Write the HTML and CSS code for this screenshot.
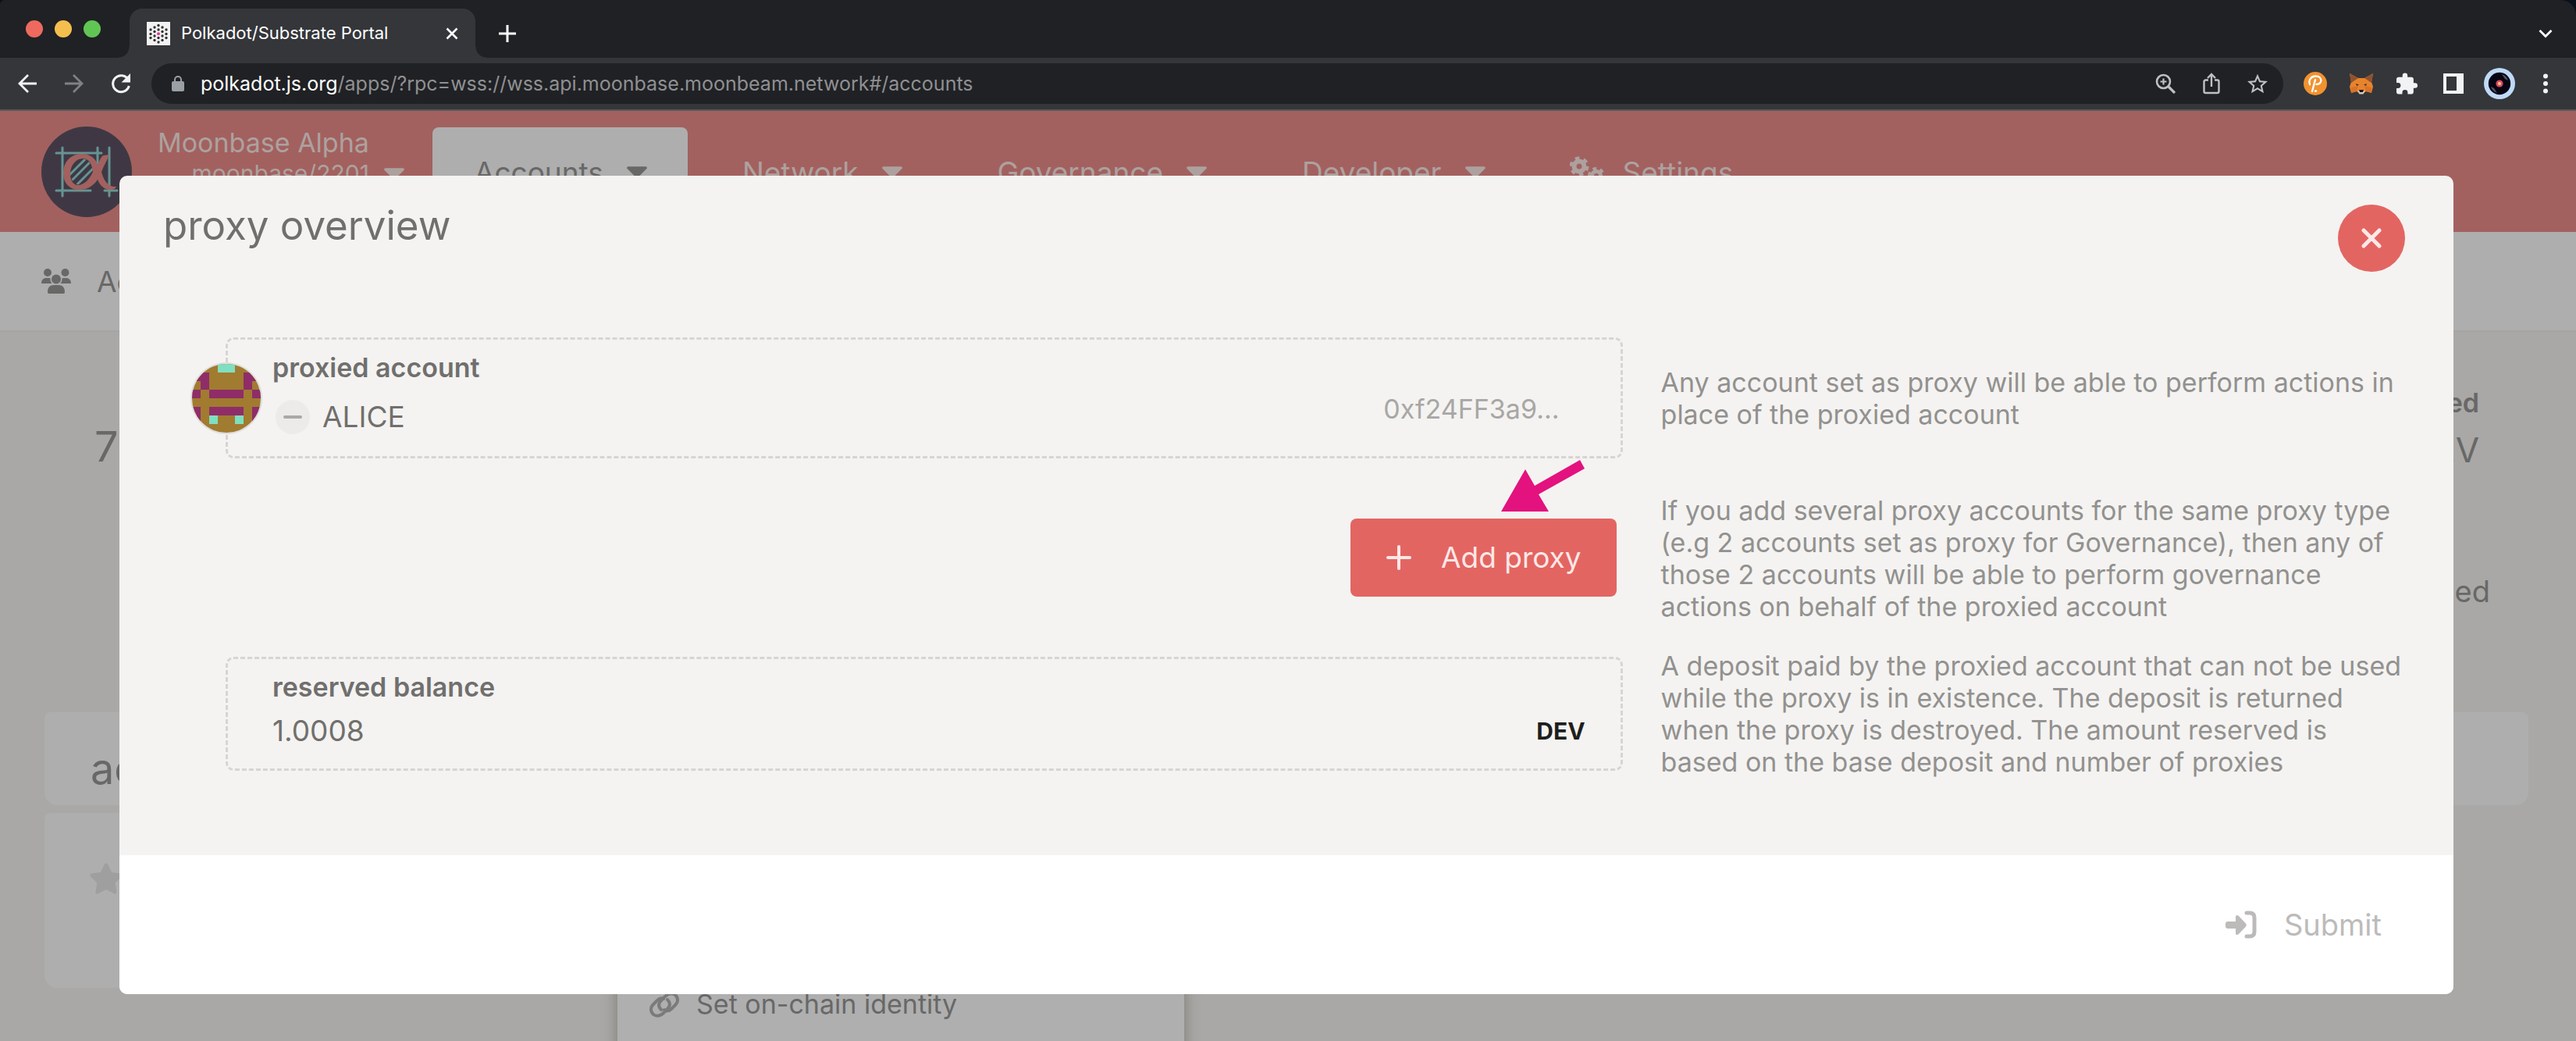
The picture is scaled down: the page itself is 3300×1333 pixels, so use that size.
FILE: index.html
```html
<!DOCTYPE html>
<html lang="en">
<head>
<meta charset="utf-8">
<title>Polkadot/Substrate Portal</title>
<link rel="stylesheet" href="styles.css">
</head>
<body>
<svg class="sprite" aria-hidden="true">
  <symbol id="caret" viewBox="10 192 300 170"><path d="M31.3 192h257.3c17.8 0 26.7 21.5 14.1 34.1L174.1 354.8c-7.8 7.8-20.5 7.8-28.3 0L17.2 226.1C4.6 213.5 13.5 192 31.3 192z"/></symbol>
</svg>
<div class="window">
  <header class="browser">
    <div class="tabstrip">
      <div class="lights"><span class="light red"></span><span class="light yellow"></span><span class="light green"></span></div>
      <div class="tab">
        <svg class="favicon" viewBox="0 0 30 30"><rect width="30" height="30" fill="#f2f2f2"/>
          <g fill="#333"><circle cx="15" cy="4.500" r="1.700"/><circle cx="10" cy="7" r="1.700"/><circle cx="20" cy="7" r="1.700"/><circle cx="5" cy="10" r="1.700"/><circle cx="15" cy="10" r="1.700"/><circle cx="25" cy="10" r="1.700"/><circle cx="10" cy="12.500" r="1.700"/><circle cx="20" cy="12.500" r="1.700"/><circle cx="5" cy="15.500" r="1.700"/><circle cx="25" cy="15.500" r="1.700"/><circle cx="10" cy="18" r="1.700"/><circle cx="20" cy="18" r="1.700"/><circle cx="5" cy="20.500" r="1.700"/><circle cx="15" cy="20.500" r="1.700"/><circle cx="25" cy="20.500" r="1.700"/><circle cx="10" cy="23.500" r="1.700"/><circle cx="20" cy="23.500" r="1.700"/><circle cx="15" cy="26" r="1.700"/></g><circle cx="15" cy="15.300" r="2" fill="#d6409a"/></svg>
        <span class="tab-title">Polkadot/Substrate Portal</span>
        <button class="icon-btn tab-close" aria-label="Close tab"><svg width="16" height="16" viewBox="0 0 16 16"><path d="M1.500 1.500l13 13M14.500 1.500l-13 13" stroke="#fff" stroke-width="2.600"/></svg></button>
      </div>
      <button class="icon-btn new-tab" aria-label="New tab"><svg width="22" height="22" viewBox="0 0 22 22"><path d="M11 0v22M0 11h22" stroke="#fff" stroke-width="3"/></svg></button>
      <button class="icon-btn tab-search" aria-label="Search tabs"><svg width="18" height="12" viewBox="0 0 18 12"><path d="M1.500 2L9 9.500 16.500 2" fill="none" stroke="#fff" stroke-width="2.800"/></svg></button>
    </div>
    <div class="toolbar">
      <button class="icon-btn nav-btn" aria-label="Back"><svg width="24" height="24" viewBox="0 0 24 24"><path d="M24 12H2M13 1L2 12l11 11" fill="none" stroke="#f1f3f4" stroke-width="2.800"/></svg></button>
      <button class="icon-btn nav-btn" aria-label="Forward"><svg width="24" height="24" viewBox="0 0 24 24"><path d="M0 12h22M11 1l11 11-11 11" fill="none" stroke="#808184" stroke-width="2.800"/></svg></button>
      <button class="icon-btn nav-btn" aria-label="Reload"><svg width="26" height="26" viewBox="0 0 26 26"><path d="M22 7.500A10.500 10.500 0 1 0 23.300 16" fill="none" stroke="#f1f3f4" stroke-width="3"/><path d="M25 0v11.500H13.500z" fill="#f1f3f4"/></svg></button>
      <div class="omnibox">
        <svg width="16" height="20" viewBox="0 0 16 20"><rect y="7" width="16" height="13" rx="2" fill="#9aa0a6"/><path d="M4 8V5a4 4 0 0 1 8 0v3" fill="none" stroke="#9aa0a6" stroke-width="2"/></svg>
        <span class="url"><span class="host">polkadot.js.org</span>/apps/?rpc=wss://wss.api.moonbase.moonbeam.network#/accounts</span>
        <button class="icon-btn ext" aria-label="Zoom"><svg width="26" height="26" viewBox="0 0 26 26" fill="none" stroke="#bdc1c6" stroke-width="2.600"><circle cx="10.500" cy="10.500" r="8.500"/><path d="M10.500 6.500v8M6.500 10.500h8" stroke-width="2.200"/><path d="M17 17l8 8" stroke-width="3.200"/></svg></button>
        <button class="icon-btn ext" aria-label="Share"><svg width="22" height="28" viewBox="0 0 22 28" fill="none" stroke="#bdc1c6" stroke-width="2.400"><path d="M7 9.500H3.500a2 2 0 0 0-2 2v12.500a2 2 0 0 0 2 2h15a2 2 0 0 0 2-2V11.500a2 2 0 0 0-2-2H15M11 18V2.500M6 7l5-5 5 5"/></svg></button>
        <button class="icon-btn ext" aria-label="Bookmark"><svg width="26" height="28" viewBox="2 1 20 21" fill="#bdc1c6"><path d="M22 9.240l-7.190-.620L12 2 9.190 8.630 2 9.240l5.460 4.730L5.820 21 12 17.270 18.180 21l-1.630-7.030L22 9.240zM12 15.400l-3.760 2.270 1-4.280-3.320-2.880 4.380-.380L12 6.100l1.710 4.040 4.380.380-3.320 2.880 1 4.280L12 15.400z"/></svg></button>
      </div>
      <button class="icon-btn ext" aria-label="Polkadot extension"><svg width="30" height="30" viewBox="0 0 30 30"><circle cx="15" cy="15" r="15" fill="#f2922f"/><path d="M8 16c-2-6 2-10.500 7.500-10.500 9 0 9 10.500 1 10.500M15 10l-4 15" fill="none" stroke="#fff" stroke-width="2.400" stroke-linecap="round"/><circle cx="15.500" cy="24.500" r="1.600" fill="#fff"/></svg></button>
      <button class="icon-btn ext" aria-label="MetaMask"><svg width="30" height="28" viewBox="0 0 30 28"><path d="M0 1l11 6h8l11-6-2 11 2 6-2 8-7-2-4 3h-4l-4-3-7 2-2-8 2-6z" fill="#e8832b"/><path d="M0 1l11 6-9 6zM30 1L19 7l9 6z" fill="#8f5330"/><path d="M2 26l7-2 2-7-9 2zM28 26l-7-2-2-7 9 2z" fill="#d97328"/><path d="M8 14l4 1.500-3 1.500zM22 14l-4 1.500 3 1.500z" fill="#3b3440"/><path d="M10 23h10l-2.500 4.500h-5z" fill="#d8c9bd"/><path d="M12 22h6l-1 3h-4z" fill="#161616"/></svg></button>
      <button class="icon-btn ext" aria-label="Extensions"><svg width="27" height="28" viewBox="2 1 21 21"><path fill="#f1f3f4" d="M20.500 11H19V7c0-1.100-.900-2-2-2h-4V3.500a2.500 2.500 0 0 0-5 0V5H4c-1.100 0-2 .900-2 2v3.800h1.500a2.700 2.700 0 0 1 0 5.400H2V20c0 1.100.900 2 2 2h3.800v-1.500a2.700 2.700 0 0 1 5.400 0V22H17c1.100 0 2-.900 2-2v-4h1.500a2.500 2.500 0 0 0 0-5z"/></svg></button>
      <button class="icon-btn ext" aria-label="Side panel"><svg width="26" height="26" viewBox="0 0 26 26"><path fill="#f1f3f4" fill-rule="evenodd" d="M0 0h26v26H0zM4 4v18h13V4z"/></svg></button>
      <button class="icon-btn ext" aria-label="Profile"><svg width="40" height="40" viewBox="0 0 40 40"><circle cx="20" cy="20" r="20" fill="#bedaf7"/><circle cx="20" cy="20" r="14.200" fill="#070414"/><path d="M23 8a12 12 0 0 1 8 8l-4-2zM17 32a12 12 0 0 1-8-8l4 2z" fill="#55555d"/><circle cx="20" cy="20" r="4.600" fill="#d8476b"/><circle cx="20" cy="20" r="2" fill="#ffd257"/></svg></button>
      <button class="icon-btn ext" aria-label="Menu"><svg width="6" height="26" viewBox="0 0 6 26" fill="#f1f3f4"><circle cx="3" cy="3.500" r="3"/><circle cx="3" cy="13" r="3"/><circle cx="3" cy="22.500" r="3"/></svg></button>
    </div>
  </header>

  <div class="viewport">
    <div class="app">
      <nav class="menubar">
        <svg class="logo" viewBox="0 0 116 116">
          <defs><clipPath id="bowl"><ellipse cx="51" cy="58" rx="15" ry="17"/></clipPath></defs>
          <circle cx="58" cy="58" r="58" fill="#3f3844"/>
          <g stroke="#659492" stroke-width="3" stroke-linecap="round" fill="none">
            <path d="M19 34h58M27 27v62M72 27v20M87 27v62M19 82h44M81 82h16"/>
            <path clip-path="url(#bowl)" d="M32 66l30-30M34 74l36-36M42 78l36-36"/>
          </g>
          <path fill="#a2615f" fill-rule="evenodd" d="M52 35C62 35 70 41 72 49C75 43 77 37 80 37L87 36C84 44 80 50 77 58C79 66 84 78 96 77C94 83 78 84 72 68C66 77 58 81 48 81C36 81 28 72 28 60C28 45 38 35 52 35ZM53 41C44 41 37 50 37 61C37 69 41 75 47 75C55 75 62 67 66 58C65 48 61 41 53 41Z"/>
        </svg>
        <button class="chain"><span class="chain-name">Moonbase Alpha</span><span class="chain-spec">moonbase/2201</span><svg class="caret"><use href="#caret"/></svg></button>
        <button class="menu active">Accounts<svg class="caret"><use href="#caret"/></svg></button>
        <button class="menu">Network<svg class="caret"><use href="#caret"/></svg></button>
        <button class="menu">Governance<svg class="caret"><use href="#caret"/></svg></button>
        <button class="menu">Developer<svg class="caret"><use href="#caret"/></svg></button>
        <a class="menu settings" href="#settings"><svg width="48" height="40" viewBox="0 0 48 40" fill="none" stroke="#ada19f"><circle cx="12" cy="13" r="6.500" stroke-width="6"/><circle cx="12" cy="13" r="10.500" stroke-width="4" stroke-dasharray="5.500 5.500"/><circle cx="34" cy="25" r="5.500" stroke-width="5"/><circle cx="34" cy="25" r="9" stroke-width="4" stroke-dasharray="4.700 4.700"/></svg>Settings</a>
      </nav>
      <div class="subnav">
        <svg width="38" height="32" viewBox="0 0 38 32" fill="#686867"><circle cx="8" cy="5" r="5"/><circle cx="30.500" cy="5" r="5"/><circle cx="19" cy="13.500" r="6"/><path d="M0 19c0-5 3-7 6-7h4c1 0 1.500.300 1.500.300-.300 3 .500 5 2 6.700zM38 19c0-5-3-7-6-7h-4c-1 0-1.500.300-1.500.300.300 3-.500 5-2 6.700zM8 30c0-6 3-9 8-9h6c5 0 8 3 8 9 0 1-.500 2-2 2H10c-1.500 0-2-1-2-2z"/></svg>
        <a href="#accounts">Accounts</a>
      </div>
      <main class="content">
        <section class="summary">
          <div class="count">7</div>
          <div class="totals">
            <div class="total"><div class="total-label">reserved</div><div class="total-value">DEV</div></div>
            <div class="filter">proxied</div>
          </div>
        </section>
        <section class="card heading-card"><h2>accounts</h2></section>
        <section class="card account-card">
          <svg width="44" height="40" viewBox="0 0 576 512" fill="#a09f9f"><path d="M259.300 17.800L194 150.200 47.900 171.500c-26.200 3.800-36.700 36.100-17.700 54.600l105.700 103-25 145.500c-4.500 26.300 23.200 46 46.400 33.700L288 439.600l130.700 68.700c23.200 12.200 50.900-7.400 46.400-33.700l-25-145.500 105.700-103c19-18.500 8.500-50.800-17.700-54.600L382 150.200 316.700 17.800c-11.700-23.600-45.600-23.900-57.400 0z"/></svg>
          <div class="popup">
            <button class="popup-item"><svg width="42" height="34" viewBox="0 0 42 34" fill="none" stroke="#7c7b7b" stroke-width="4" stroke-linecap="round"><path d="M17 24c-4-4-4-8 0-12l5-5c4-4 9-5 13-2 4 4 4 9 0 13l-5 5c-3 3-7 3-9 1"/><path d="M25 11c4 4 4 8 0 12l-4 4c-4 5-10 6-14 3-4-4-4-9 0-13l5-5c3-3 6-3 8-2"/></svg>Set on-chain identity</button>
          </div>
        </section>
      </main>
    </div>

    <div class="overlay">
      <div class="modal" role="dialog" aria-labelledby="modal-title">
        <header class="modal-head">
          <h1 id="modal-title">proxy overview</h1>
          <button class="close" aria-label="Close"><svg width="26" height="26" viewBox="0 0 26 26"><path d="M3 3l20 20M23 3L3 23" stroke="#fde8e6" stroke-width="5" stroke-linecap="round"/></svg></button>
        </header>
        <div class="rows">
          <div class="field account">
            <svg class="identicon" viewBox="0 0 92 92">
              <defs><clipPath id="disc"><circle cx="46" cy="46" r="44"/></clipPath></defs>
              <circle cx="46" cy="46" r="46" fill="#dfdedd"/>
              <g clip-path="url(#disc)"><g transform="translate(2 2) scale(11)" shape-rendering="crispEdges"><rect width="8" height="8" fill="#a17b30"/><path fill="#8f2d68" d="M0 1h2v2h-1v-1h-1zM6 1h2v1h-1v1h-1zM0 3h1v1h-1zM2 3h4v1h-4zM7 3h1v1h-1zM0 5h1v2h-1zM2 5h4v1h-4zM7 5h1v2h-1z"/><path fill="#7fdfc0" d="M3 0h2v1h-2zM2 6h1v1h-1zM5 6h1v1h-1z"/></g></g>
            </svg>
            <label for="proxied">proxied account</label>
            <div class="account-line">
              <span class="badge"><svg width="24" height="4" viewBox="0 0 24 4"><path d="M2 2h20" stroke="#aaa9a8" stroke-width="4" stroke-linecap="round"/></svg></span>
              <output id="proxied" class="value">ALICE</output>
              <span class="address">0xf24FF3a9...</span>
            </div>
          </div>
          <p class="help tall">Any account set as proxy will be able to perform actions in place of the proxied account</p>

          <div class="actions">
            <button class="add"><svg width="32" height="32" viewBox="0 0 32 32"><path d="M16 2v28M2 16h28" stroke="#fde8e6" stroke-width="4" stroke-linecap="round"/></svg>Add proxy
              <svg class="pointer" viewBox="0 0 107 66"><path fill="#e3127e" d="M0 66L31 12l12 21L101 0l6 11-59 33 13 22z"/></svg>
            </button>
          </div>
          <p class="help">If you add several proxy accounts for the same proxy type (e.g 2 accounts set as proxy for Governance), then any of those 2 accounts will be able to perform governance actions on behalf of the proxied account</p>

          <div class="field balance">
            <label for="reserved">reserved balance</label>
            <div class="balance-line"><output id="reserved" class="value">1.0008</output><span class="unit">DEV</span></div>
          </div>
          <p class="help">A deposit paid by the proxied account that can not be used while the proxy is in existence. The deposit is returned when the proxy is destroyed. The amount reserved is based on the base deposit and number of proxies</p>
        </div>
        <footer class="modal-foot">
          <button class="submit" disabled><svg width="40" height="36" viewBox="0 0 40 36"><path d="M3 14h10V8c0-2 2-3 4-1l9 9.500c1 1.200 1 2.800 0 4L17 30c-2 2-4 1-4-1v-6H3c-2 0-3-1-3-3v-3c0-2 1-3 3-3z" fill="#bcbbba"/><path d="M27 3h4c4 0 6 2 6 6v18c0 4-2 6-6 6h-4" fill="none" stroke="#bcbbba" stroke-width="5" stroke-linecap="round"/></svg>Submit</button>
        </footer>
      </div>
    </div>
  </div>
</div>
</body>
</html>
```
FILE: styles.css
```css
* { box-sizing: border-box; }
body { margin: 0; background: #0c101b; font-family: Inter, "Liberation Sans", sans-serif; font-size: 34px; line-height: 41px; }
button { border: 0; background: none; padding: 0; margin: 0; font: inherit; color: inherit; text-align: left; }
a { color: inherit; text-decoration: none; }
h1, h2, p { margin: 0; font-weight: 400; }
svg { display: block; flex: none; }
.sprite { position: absolute; width: 0; height: 0; }

.window { display: flex; flex-direction: column; height: 100vh; overflow: hidden; border-radius: 6px 20px 0 0; }

/* Browser chrome */
.browser { background: #202124; }
.tabstrip { display: flex; align-items: center; height: 74px; padding: 0 30px 0 33px; }
.lights { display: flex; gap: 15px; }
.light { width: 22px; height: 22px; border-radius: 50%; }
.red { background: #ee6a5f; }
.yellow { background: #f5bf4f; }
.green { background: #61c554; }
.tab { position: relative; align-self: flex-end; display: flex; align-items: center; width: 443px; height: 63px; margin-left: 37px; padding: 0 22px; border-radius: 16px 16px 0 0; background: #35363a; }
.tab::before, .tab::after { content: ""; position: absolute; bottom: 0; width: 14px; height: 14px; }
.tab::before { right: 100%; background: radial-gradient(circle at 0 0, #202124 13px, #35363a 14px); }
.tab::after { left: 100%; background: radial-gradient(circle at 100% 0, #202124 13px, #35363a 14px); }
.favicon { width: 30px; height: 30px; }
.tab-title { margin-left: 14px; font-size: 22px; color: #fff; white-space: nowrap; }
.icon-btn { display: flex; align-items: center; justify-content: center; flex: none; }
.tab-close { margin-left: auto; }
.new-tab { margin-left: 30px; margin-top: 11px; }
.tab-search { margin-left: auto; margin-top: 11px; }
.toolbar { display: flex; align-items: center; height: 68px; padding: 0 10px 0 5px; background: #35363a; border-bottom: 2px solid #55585b; }
.nav-btn { width: 60px; height: 52px; }
.omnibox { display: flex; align-items: center; flex: 1; height: 52px; margin: 0 11px 0 9px; padding: 0 4px 0 26px; border-radius: 26px; background: #202124; }
.url { flex: 1; margin-left: 21px; font-size: 25px; color: #8f9093; white-space: nowrap; }
.host { color: #fff; }
.ext { width: 59px; height: 52px; }

/* App behind the dialog */
.viewport { position: relative; flex: 1; min-height: 0; overflow: hidden; }
.app { min-height: 100%; background: #a9a8a6; color: #686867; }
.menubar { display: flex; align-items: flex-start; height: 155px; padding: 20px 53px 0; background: #a2615f; color: #ada19f; }
.logo { width: 116px; height: 116px; }
.caret { width: 26px; height: 15px; fill: currentColor; }
.chain { display: grid; grid-template-columns: auto auto; column-gap: 19px; row-gap: 1px; margin: 0 36px 0 33px; text-align: right; align-items: center; }
.chain-spec { grid-column: 1; font-size: 30px; line-height: 36px; }
.menu { display: flex; align-items: center; align-self: stretch; gap: 30px; margin: 1px 16px 0 0; padding: 0 52px 20px 54px; font-size: 37px; line-height: 45px; border-radius: 8px 8px 0 0; }
.menu.active { background: #aeaeae; color: #686867; }
.menu.settings { gap: 20px; padding-left: 40px; }
.subnav { display: flex; align-items: center; gap: 33px; height: 128px; padding: 0 53px; font-size: 37px; line-height: 45px; background: #aeaeae; border-bottom: 2px solid #a5a4a3; }
.content { padding: 0 61px 0 57px; }
.summary { display: flex; justify-content: space-between; padding: 70px 49px 132px 64px; }
.count { padding-top: 45px; font-size: 54px; line-height: 64px; }
.totals { display: flex; flex-direction: column; gap: 133px; text-align: right; }
.total { display: grid; gap: 14px; padding-right: 14px; }
.total-label { font-weight: 600; }
.total-value { font-size: 44px; line-height: 52px; }
.filter { font-size: 38px; line-height: 45px; }
.card { background: #aeaeae; border-radius: 8px 8px 16px 16px; }
.heading-card { padding: 41px 59px 14px; margin-bottom: 10px; }
.heading-card h2 { font-size: 54px; line-height: 64px; }
.account-card { position: relative; width: 50%; padding: 64px 57px 120px; }
.popup { position: absolute; top: 199px; left: 734px; width: 726px; padding: 25px 39px 60px; background: #afafaf; box-shadow: 0 0 18px rgba(60, 60, 50, 0.4); }
.popup-item { display: flex; align-items: center; gap: 20px; }

/* Dialog */
.overlay { position: absolute; inset: 0; padding: 83px 157px 0 153px; }
.modal { border-radius: 10px; overflow: hidden; background: #f4f3f1; color: #706f6e; }
.modal-head { display: flex; justify-content: space-between; align-items: flex-start; padding: 37px 62px 73px 56px; }
.modal-head h1 { font-size: 51px; line-height: 54px; }
.close { display: flex; align-items: center; justify-content: center; width: 86px; height: 86px; border-radius: 50%; background: #e36562; }
.rows { display: grid; grid-template-columns: 15fr 8fr; column-gap: 49px; row-gap: 35px; align-items: center; padding: 0 61px 99px 136px; }
.field { position: relative; border: 3px dashed #d6d5d3; border-radius: 10px; }
.field label { display: block; font-weight: 600; }
.account { padding: 15px 78px 28px 57px; }
.account-line { display: flex; align-items: center; height: 65px; padding-left: 4px; }
.identicon { position: absolute; left: -48px; top: 50%; width: 92px; height: 92px; margin-top: -46px; }
.badge { display: flex; align-items: center; justify-content: center; align-self: flex-end; width: 44px; height: 44px; margin-right: 16px; border-radius: 50%; background: #ecebea; }
.value { font-size: 37px; line-height: 45px; }
.account .value { align-self: flex-end; }
.address { margin-left: auto; color: #a8a7a5; }
.help { color: #92918f; }
.help.tall { padding: 48px 0 47px; }
.actions { display: flex; justify-content: flex-end; padding: 0 8px 3px 0; }
.add { position: relative; display: flex; align-items: center; gap: 38px; height: 100px; padding: 0 45px 0 46px; border-radius: 8px; background: #e36562; color: #fde8e6; font-size: 37px; line-height: 45px; }
.pointer { position: absolute; right: 41px; top: -75px; width: 107px; height: 66px; }
.balance { padding: 15px 45px 26px 57px; }
.balance-line { display: flex; align-items: center; justify-content: space-between; padding-top: 13px; }
.unit { font-size: 30px; line-height: 36px; font-weight: 700; color: #1e1e1e; }
.modal-foot { display: flex; align-items: center; justify-content: flex-end; height: 178px; padding-right: 62px; background: #fff; }
.submit { display: flex; align-items: center; gap: 35px; padding: 0 30px; font-size: 38px; line-height: 45px; color: #bcbbba; }
```
